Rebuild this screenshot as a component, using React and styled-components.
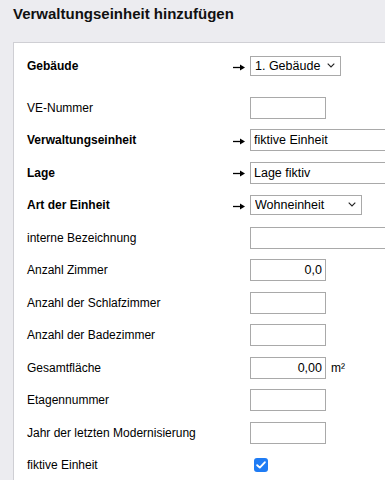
import React from "react";
import styled, { createGlobalStyle } from "styled-components";

const GlobalStyle = createGlobalStyle`
  html, body {
    margin: 0;
    padding: 0;
    overflow: hidden;
    background: #ececf0;
    font-family: "Liberation Sans", Arial, sans-serif;
    color: #000;
  }
`;

const Page = styled.div`
  padding: 4px 0 0 13px;
`;

const Title = styled.h1`
  margin: 0 0 18px;
  font-size: 15px;
  font-weight: 700;
  line-height: 20px;
  color: #111;
`;

const Card = styled.div`
  background: #fff;
  border: 1px solid #cfcfd4;
  border-right: none;
  width: 420px;
  padding: 12px 0 20px 13px;
  display: flex;
  flex-direction: column;
  gap: 10.5px;
`;

const Row = styled.div`
  display: grid;
  grid-template-columns: 206px 17px 1fr;
  align-items: center;
  min-height: 22px;
  margin-bottom: ${(p) => (p.$spaced ? "9px" : "0")};
`;

const Label = styled.span`
  font-size: 12px;
  font-weight: ${(p) => (p.$bold ? 700 : 400)};
`;

const ArrowIcon = styled.svg`
  display: block;
  margin-top: 2px;
`;

const Field = styled.div`
  display: flex;
  align-items: center;
  gap: 5px;
`;

const TextInput = styled.input`
  box-sizing: border-box;
  width: ${(p) => (p.$wide ? "180px" : "76px")};
  height: 22px;
  margin: 0;
  padding: 0 3px;
  border: 1px solid #a9a9a9;
  border-radius: 0;
  font-family: "Liberation Sans", Arial, sans-serif;
  font-size: 12.5px;
  color: #000;
  text-align: ${(p) => (p.$right ? "right" : "left")};
  outline: none;
`;

const SelectWrap = styled.div`
  position: relative;
  width: ${(p) => p.$width}px;
`;

const Select = styled.select`
  appearance: none;
  box-sizing: border-box;
  width: 100%;
  height: 20px;
  margin: 0;
  padding: 0 18px 0 4px;
  border: 1px solid #a9a9a9;
  border-radius: 0;
  background: #fff;
  font-family: "Liberation Sans", Arial, sans-serif;
  font-size: 12.5px;
  color: #000;
  outline: none;
`;

const Chevron = styled.svg`
  position: absolute;
  right: 6px;
  top: 7px;
  pointer-events: none;
`;

const Unit = styled.span`
  font-size: 12px;
`;

const Check = styled.span`
  display: inline-flex;
  align-items: center;
  justify-content: center;
  width: 14px;
  height: 14px;
  margin-left: 4px;
  border-radius: 3px;
  background: #1f7cf4;
`;

const ArrowMark = () => (
  <ArrowIcon width="12" height="7" viewBox="0 0 12 7">
    <path d="M0 3.5H8" stroke="#000" strokeWidth="1.3" />
    <path d="M7 0.6L12 3.5L7 6.4Z" fill="#000" />
  </ArrowIcon>
);

const Dropdown = ({ width, value }) => (
  <SelectWrap $width={width}>
    <Select defaultValue={value}>
      <option>{value}</option>
    </Select>
    <Chevron width="8" height="5" viewBox="0 0 8 5">
      <path d="M0.7 0.7L4 4L7.3 0.7" fill="none" stroke="#222" strokeWidth="1.1" />
    </Chevron>
  </SelectWrap>
);

const rows = [
  { label: "VE-Nummer", kind: "small" },
  { label: "Verwaltungseinheit", bold: true, arrow: true, kind: "wide", value: "fiktive Einheit" },
  { label: "Lage", bold: true, arrow: true, kind: "wide", value: "Lage fiktiv" },
  { label: "Art der Einheit", bold: true, arrow: true, kind: "select", value: "Wohneinheit", width: 112 },
  { label: "interne Bezeichnung", kind: "wide" },
  { label: "Anzahl Zimmer", kind: "small", value: "0,0", right: true },
  { label: "Anzahl der Schlafzimmer", kind: "small" },
  { label: "Anzahl der Badezimmer", kind: "small" },
  { label: "Gesamtfläche", kind: "small", value: "0,00", right: true, unit: "m²" },
  { label: "Etagennummer", kind: "small" },
  { label: "Jahr der letzten Modernisierung", kind: "small" },
];

const App = () => {
  return (
    <Page>
      <GlobalStyle />
      <Title>Verwaltungseinheit hinzufügen</Title>
      <Card>
        <Row $spaced>
          <Label $bold>Gebäude</Label>
          <ArrowMark />
          <Field>
            <Dropdown width={91} value="1. Gebäude" />
          </Field>
        </Row>
        {rows.map((r) => (
          <Row key={r.label}>
            <Label $bold={r.bold}>{r.label}</Label>
            {r.arrow ? <ArrowMark /> : <span />}
            <Field>
              {r.kind === "select" ? (
                <Dropdown width={r.width} value={r.value} />
              ) : (
                <TextInput
                  $wide={r.kind === "wide"}
                  $right={r.right}
                  defaultValue={r.value || ""}
                />
              )}
              {r.unit && <Unit>{r.unit}</Unit>}
            </Field>
          </Row>
        ))}
        <Row>
          <Label>fiktive Einheit</Label>
          <span />
          <Field>
            <Check>
              <svg width="10" height="8" viewBox="0 0 10 8">
                <path d="M1.2 4.2L3.8 6.6L8.8 1.3" fill="none" stroke="#fff" strokeWidth="1.9" strokeLinecap="round" strokeLinejoin="round" />
              </svg>
            </Check>
          </Field>
        </Row>
      </Card>
    </Page>
  );
};

export default App;
